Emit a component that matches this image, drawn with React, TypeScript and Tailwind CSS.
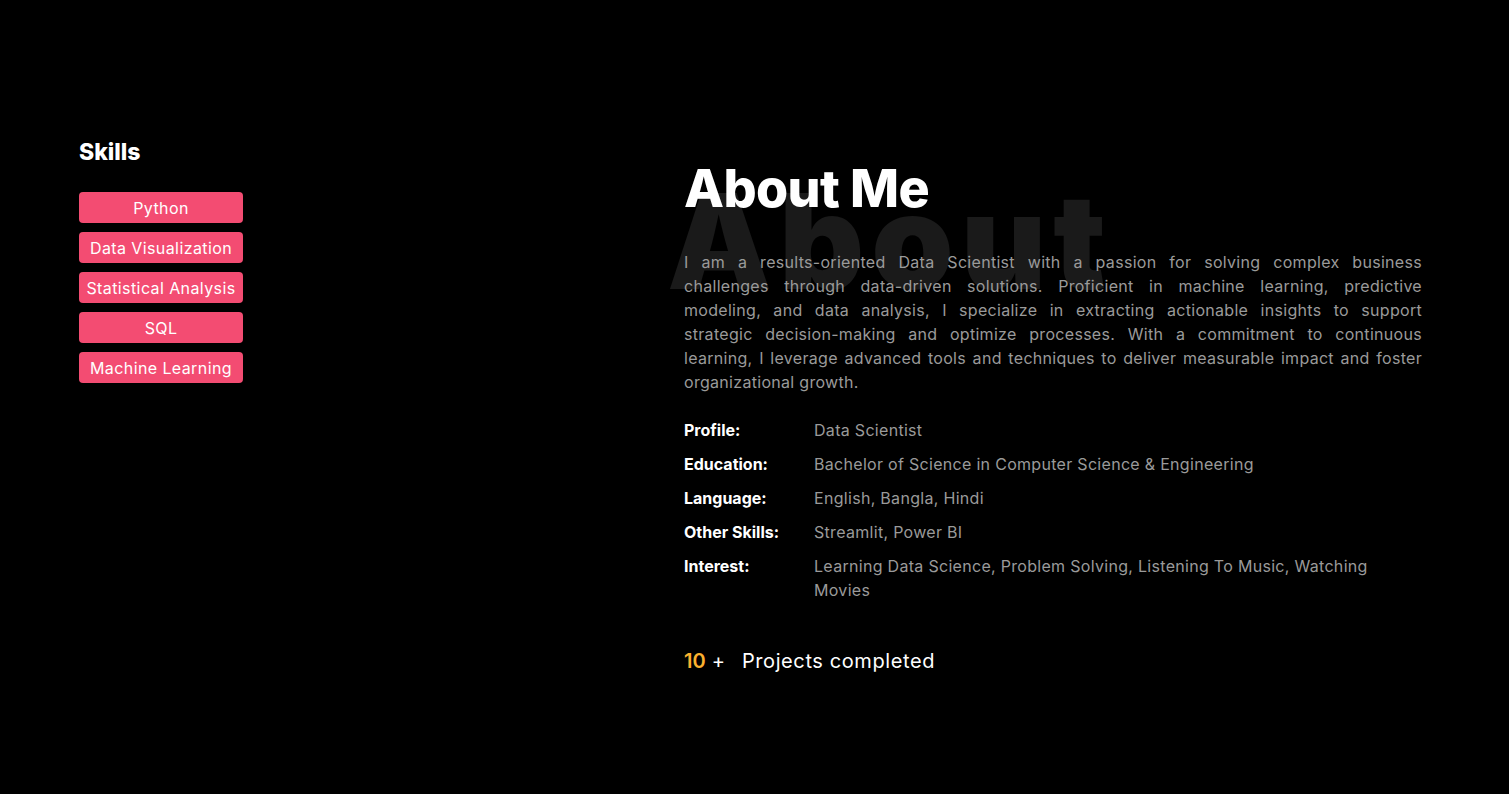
import React from "react";

const skills = ["Python", "Data Visualization", "Statistical Analysis", "SQL", "Machine Learning"];

const para = [
  "I am a results-oriented Data Scientist with a passion for solving complex business",
  "challenges through data-driven solutions. Proficient in machine learning, predictive",
  "modeling, and data analysis, I specialize in extracting actionable insights to support",
  "strategic decision-making and optimize processes. With a commitment to continuous",
  "learning, I leverage advanced tools and techniques to deliver measurable impact and foster",
];

const rows: [string, string[]][] = [
  ["Profile:", ["Data Scientist"]],
  ["Education:", ["Bachelor of Science in Computer Science & Engineering"]],
  ["Language:", ["English, Bangla, Hindi"]],
  ["Other Skills:", ["Streamlit, Power BI"]],
  ["Interest:", ["Learning Data Science, Problem Solving, Listening To Music, Watching", "Movies"]],
];

export default function App() {
  return (
    <div className="min-h-[794px] w-full bg-black font-['Inter',sans-serif] text-white">
      <div className="flex px-[79px] pt-[137px]">
        <div className="w-[605px] shrink-0">
          <h2 className="text-[23px] font-extrabold leading-[30px] tracking-[0px]">Skills</h2>
          <div className="mt-[25px] flex w-[164px] flex-col gap-[9px]">
            {skills.map((s) => (
              <div
                key={s}
                className="flex h-[31px] items-center justify-center rounded-[4px] bg-[#f34c72] text-[16px] leading-none tracking-[0.4px] text-white"
              >
                {s}
              </div>
            ))}
          </div>
        </div>
        <div className="w-[738px] shrink-0 pt-[21px]">
          <div className="relative h-[62px]">
            <div className="pointer-events-none absolute left-[-17px] top-[17px] select-none text-[132px] font-black leading-none tracking-[7px] text-[#1a1a1a]">
              About
            </div>
            <h1 className="relative text-[52px] font-extrabold leading-[62px] tracking-[-0.6px] text-white">About Me</h1>
          </div>
          <div className="relative mt-[30px] text-[16px] leading-[24px] tracking-[0.3px] text-[#9a9a9a]">
            {para.map((l, i) => (
              <div key={i} className="text-justify [text-align-last:justify]">
                {l}
              </div>
            ))}
            <div>organizational growth.</div>
          </div>
          <div className="mt-[24px] flex flex-col gap-[10px]">
            {rows.map(([k, v]) => (
              <div key={k} className="flex text-[16px] leading-[24px] tracking-[0.3px]">
                <div className="w-[130px] shrink-0 font-bold tracking-[0px] text-white">{k}</div>
                <div className="text-[#9a9a9a]">
                  {v.map((t) => (
                    <div key={t}>{t}</div>
                  ))}
                </div>
              </div>
            ))}
          </div>
          <div className="mt-[45px] flex items-center text-[20px] leading-[28px]">
            <span className="font-semibold text-[#fbb12f]">10</span>
            <span className="ml-[6px] text-white">+</span>
            <span className="ml-[17px] tracking-[0.6px] text-white">Projects completed</span>
          </div>
        </div>
      </div>
    </div>
  );
}
